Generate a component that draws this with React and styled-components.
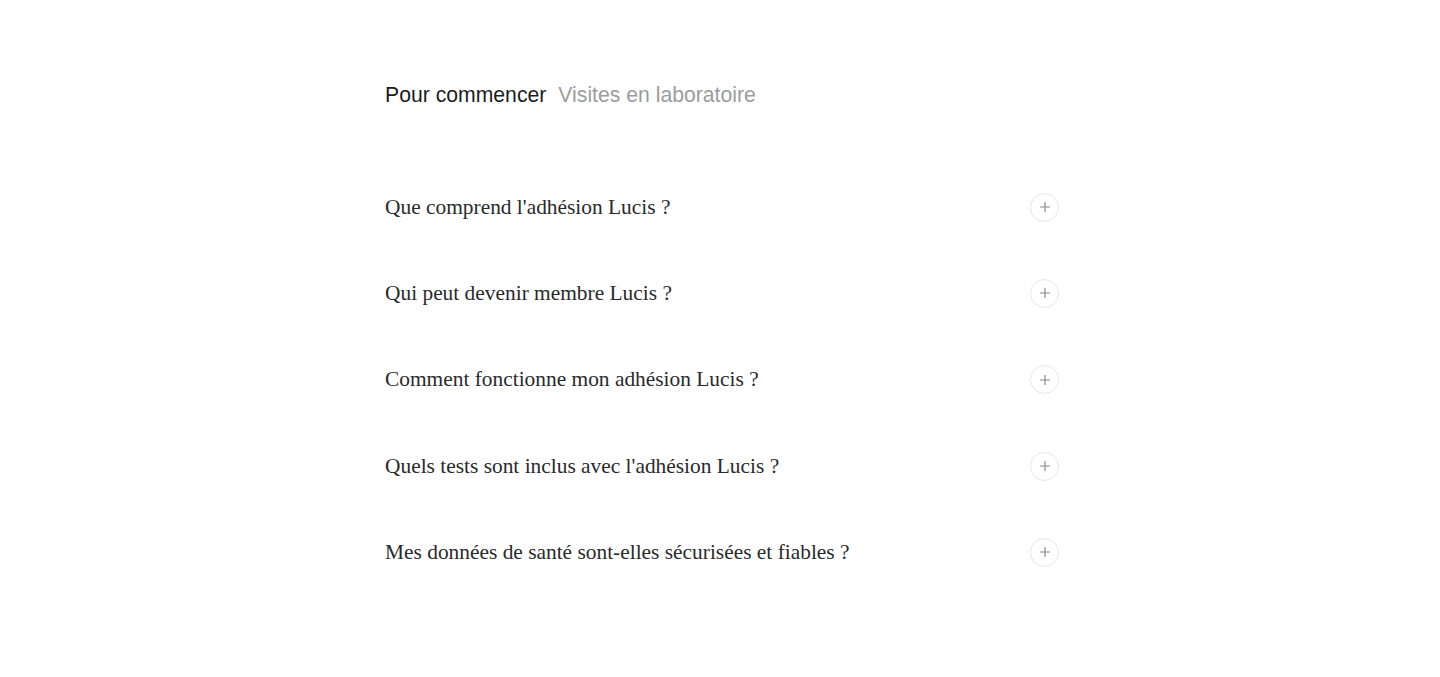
import React, { useState } from "react";
import styled, { createGlobalStyle } from "styled-components";

const GlobalStyle = createGlobalStyle`
  body {
    margin: 0;
    background: #ffffff;
    font-family: "Liberation Sans", Arial, sans-serif;
  }
`;

const tabs = ["Pour commencer", "Visites en laboratoire"];

const questions = [
  "Que comprend l'adhésion Lucis ?",
  "Qui peut devenir membre Lucis ?",
  "Comment fonctionne mon adhésion Lucis ?",
  "Quels tests sont inclus avec l'adhésion Lucis ?",
  "Mes données de santé sont-elles sécurisées et fiables ?",
];

function PlusIcon() {
  return (
    <svg width="12" height="12" viewBox="0 0 12 12" fill="none">
      <path d="M6 1v10M1 6h10" stroke="#8a8a8a" strokeWidth="1.2" />
    </svg>
  );
}

export default function App() {
  const [active, setActive] = useState(0);
  return (
    <>
      <GlobalStyle />
      <Page>
        <Section>
          <Tabs>
            {tabs.map((t, i) => (
              <Tab key={t} active={i === active} onClick={() => setActive(i)}>
                {t}
              </Tab>
            ))}
          </Tabs>
          <List>
            {questions.map((q) => (
              <Item key={q}>
                <Question>{q}</Question>
                <ToggleButton aria-label="Ouvrir">
                  <PlusIcon />
                </ToggleButton>
              </Item>
            ))}
          </List>
        </Section>
      </Page>
    </>
  );
}

const Page = styled.div`
  min-height: 677px;
  padding: 80px 0 0 4px;
  box-sizing: border-box;
`;

const Section = styled.section`
  width: 674px;
  margin: 0 auto;
`;

const Tabs = styled.div`
  display: flex;
  gap: 12px;
  margin-bottom: 54px;
`;

const Tab = styled.button`
  border: none;
  background: none;
  padding: 0;
  cursor: pointer;
  font-family: "Liberation Sans", Arial, sans-serif;
  font-size: 21.2px;
  line-height: 30px;
  color: ${(p) => (p.active ? "#1c1c1c" : "#9a9d9d")};
`;

const List = styled.div`
  display: flex;
  flex-direction: column;
`;

const Item = styled.div`
  display: flex;
  align-items: center;
  justify-content: space-between;
  height: 86.3px;
`;

const Question = styled.h3`
  margin: 0;
  font-family: "Liberation Serif", "Times New Roman", serif;
  font-weight: 400;
  font-size: 21.4px;
  color: #2a2a2a;
`;

const ToggleButton = styled.button`
  width: 29px;
  height: 29px;
  border-radius: 50%;
  border: 1px solid #e6e6e6;
  background: #fff;
  display: flex;
  align-items: center;
  justify-content: center;
  padding: 0;
  cursor: pointer;
`;
